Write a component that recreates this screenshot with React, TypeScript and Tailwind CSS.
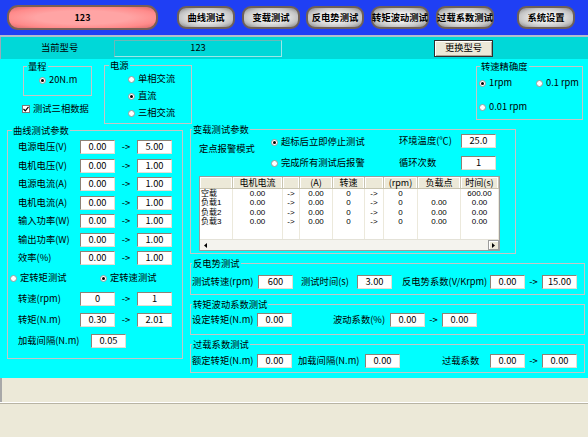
import React from 'react';

// Motor test bench main window: blue tool bar, model strip, cyan form area.

const TOP_BUTTONS = [
  { label: '曲线测试', cls: 'ml-[19px]' },
  { label: '变载测试', cls: 'ml-[7px]' },
  { label: '反电势测试', cls: 'ml-[6px]' },
  { label: '转矩波动测试', cls: 'ml-[7px]' },
  { label: '过载系数测试', cls: 'ml-[7px]' },
  { label: '系统设置', cls: 'ml-[23px]' },
];

const CURVE_ROWS = [
  { label: '电源电压(V)', from: '0.00', to: '5.00' },
  { label: '电机电压(V)', from: '0.00', to: '1.00' },
  { label: '电源电流(A)', from: '0.00', to: '1.00' },
  { label: '电机电流(A)', from: '0.00', to: '1.00' },
  { label: '输入功率(W)', from: '0.00', to: '1.00' },
  { label: '输出功率(W)', from: '0.00', to: '1.00' },
  { label: '效率(%)', from: '0.00', to: '1.00' },
];

const TABLE_HEAD = ['', '电机电流', '', '(A)', '转速', '', '(rpm)', '负载点', '时间(s)'];

const TABLE_ROWS = [
  ['空载', '0.00', '->', '0.00', '0', '->', '0', '', '600.00'],
  ['负载1', '0.00', '->', '0.00', '0', '->', '0', '0.00', '0.00'],
  ['负载2', '0.00', '->', '0.00', '0', '->', '0', '0.00', '0.00'],
  ['负载3', '0.00', '->', '0.00', '0', '->', '0', '0.00', '0.00'],
];

const COLS = 'grid grid-cols-[33px_50px_17px_33px_32px_19px_34px_43px_38px]';

function Field({ value, className = '' }: { value: string; className?: string }) {
  return (
    <span
      className={`flex h-[14px] w-[35px] shrink-0 items-center justify-center border border-t-[#8c8276] border-l-[#8c8276] border-b-[#e4e0d4] border-r-[#e4e0d4] bg-white ${className}`}
    >
      {value}
    </span>
  );
}

function Arrow({ className = 'w-[22px]' }: { className?: string }) {
  return <span className={`shrink-0 text-center ${className}`}>-&gt;</span>;
}

function Radio({ checked, label, className = '' }: { checked?: boolean; label: string; className?: string }) {
  return (
    <span className={`flex h-[12px] items-center gap-[3px] ${className}`}>
      <span className="flex h-[7px] w-[7px] shrink-0 items-center justify-center rounded-full border border-[#9a9a9a] bg-white">
        {checked && <span className="h-[3px] w-[3px] rounded-full bg-black" />}
      </span>
      <span className="whitespace-nowrap">{label}</span>
    </span>
  );
}

function Group({
  title,
  className = '',
  legend = 'ml-[1px]',
  children,
}: {
  title: string;
  className?: string;
  legend?: string;
  children?: React.ReactNode;
}) {
  return (
    <fieldset className={`shrink-0 border border-[#c6c6c6] ${className}`}>
      <legend className={`px-[1px] leading-[12px] ${legend}`}>{title}</legend>
      {children}
    </fieldset>
  );
}

function TopBar() {
  return (
    <div className="flex h-[35px] items-center bg-[#1f3ff4]">
      <div className="ml-[7px] flex h-[25px] w-[151px] items-center justify-center rounded-[11px] border-2 border-[#7a5e54] bg-[radial-gradient(ellipse_at_center,#ffa4a4_45%,#ff8a8a_75%,#d86a6a_100%)] text-[9px] font-bold">
        123
      </div>
      {TOP_BUTTONS.map((b) => (
        <div
          key={b.label}
          className={`flex h-[23px] w-[58px] items-center justify-center rounded-[9px] border-2 border-[#6e6058] bg-[radial-gradient(ellipse_at_center,#ececec_35%,#c4c4c4_70%,#7c7c7c_100%)] text-[9.3px] font-bold whitespace-nowrap ${b.cls}`}
        >
          {b.label}
        </div>
      ))}
    </div>
  );
}

function ModelStrip() {
  return (
    <div className="flex h-[22px] items-center border-l border-[#9ab] bg-[#00d8d8]">
      <span className="ml-[40px] w-[73px]">当前型号</span>
      <span className="flex h-[17px] w-[168px] items-center justify-center border border-[#9ae8e8] border-t-[#6cb8b8] border-l-[#6cb8b8]">
        123
      </span>
      <span className="ml-[152px] flex h-[17px] w-[59px] items-center justify-center border border-[#2e2e2e] bg-[#ece9d8] shadow-[inset_1px_1px_0_#ffffff,inset_-1px_-1px_0_#aca899]">
        更换型号
      </span>
    </div>
  );
}

function CurveGroup() {
  return (
    <Group title="曲线测试参数" className="ml-[7px] h-[235px] w-[176px]" legend="ml-[4px]">
      <div className="flex flex-col gap-[4.5px] pt-[4px] pl-[10px]">
        {CURVE_ROWS.map((r) => (
          <div key={r.label} className="flex h-[14px] items-center">
            <span className="w-[62px] whitespace-nowrap">{r.label}</span>
            <Field value={r.from} />
            <Arrow />
            <Field value={r.to} />
          </div>
        ))}
      </div>
      <div className="mt-[7px] flex pl-[2px]">
        <Radio label="定转矩测试" className="w-[90px]" />
        <Radio checked label="定转速测试" />
      </div>
      <div className="mt-[8px] flex flex-col gap-[7px] pl-[10px]">
        <div className="flex h-[14px] items-center">
          <span className="w-[62px]">转速(rpm)</span>
          <Field value="0" />
          <Arrow />
          <Field value="1" />
        </div>
        <div className="flex h-[14px] items-center">
          <span className="w-[62px]">转矩(N.m)</span>
          <Field value="0.30" />
          <Arrow />
          <Field value="2.01" />
        </div>
        <div className="flex h-[14px] items-center">
          <span className="w-[73px]">加载间隔(N.m)</span>
          <Field value="0.05" />
        </div>
      </div>
    </Group>
  );
}

function LoadTable() {
  return (
    <div className="ml-[8px] flex h-[75px] w-[301px] flex-col overflow-hidden border border-[#9c9c9c] bg-white text-[9px]">
      <div className={`${COLS} h-[12px] bg-[#ece9d8]`}>
        {TABLE_HEAD.map((h, i) => (
          <span
            key={i}
            className="flex items-center justify-center border-r border-b border-[#c8c4b0] shadow-[inset_-1px_0_0_#ffffff,inset_1px_1px_0_#ffffff] whitespace-nowrap"
          >
            {h}
          </span>
        ))}
      </div>
      <div className="flex flex-1 flex-col font-['Liberation_Sans','Noto_Sans_CJK_SC',sans-serif] text-[8px]">
        {TABLE_ROWS.map((row) => (
          <div key={row[0]} className={`${COLS} h-[9.3px] leading-[9.3px]`}>
            {row.map((c, i) => (
              <span
                key={i}
                className={`border-r border-[#ece9dc] whitespace-nowrap ${i === 0 ? 'pl-[1px] text-left' : 'text-center'}`}
              >
                {c}
              </span>
            ))}
          </div>
        ))}
        <div className={`${COLS} flex-1`}>
          {TABLE_HEAD.map((_, i) => (
            <span key={i} className="border-r border-[#ece9dc]" />
          ))}
        </div>
      </div>
      <div className="flex h-[11px] border-t border-[#e4e2d8] bg-[#f4f3ee]">
        <span className="flex w-[11px] items-center justify-center">
          <svg width="3" height="5" viewBox="0 0 3 5">
            <path d="M3 0 L0 2.5 L3 5 Z" fill="#000" />
          </svg>
        </span>
        <span className="flex-1" />
        <span className="flex w-[11px] items-center justify-center border border-[#9c9c9c] bg-[#ece9d8] shadow-[inset_1px_1px_0_#ffffff]">
          <svg width="3" height="5" viewBox="0 0 3 5">
            <path d="M0 0 L3 2.5 L0 5 Z" fill="#000" />
          </svg>
        </span>
      </div>
    </div>
  );
}

function LoadGroup() {
  return (
    <Group title="变载测试参数" className="mt-[-1px] h-[131px] w-[326px]">
      <div className="flex h-[41px] pl-[8px]">
        <span className="mt-[9px] h-[12px] w-[72px] whitespace-nowrap">定点报警模式</span>
        <div className="flex w-[128px] flex-col gap-[9px] pt-[1px]">
          <Radio checked label="超标后立即停止测试" />
          <Radio label="完成所有测试后报警" />
        </div>
        <div className="mt-[-1px] flex flex-col gap-[8px]">
          <div className="flex h-[14px] items-center">
            <span className="w-[62px]">环境温度(℃)</span>
            <Field value="25.0" />
          </div>
          <div className="flex h-[14px] items-center">
            <span className="w-[62px]">循环次数</span>
            <Field value="1" />
          </div>
        </div>
      </div>
      <LoadTable />
    </Group>
  );
}

function CheckBox({ label }: { label: string }) {
  return (
    <span className="flex items-center gap-[3px]">
      <span className="flex h-[8px] w-[8px] items-center justify-center border border-[#7a7a7a] bg-white">
        <svg width="6" height="6" viewBox="0 0 6 6">
          <path d="M0.5 3 L2.3 4.8 L5.5 0.8" stroke="#000" strokeWidth="1.2" fill="none" />
        </svg>
      </span>
      <span>{label}</span>
    </span>
  );
}

export default function App() {
  return (
    <div className="flex h-[437px] w-[588px] flex-col overflow-hidden bg-[#ece9d8] font-['Noto_Sans_CJK_SC',sans-serif] text-[9.3px] leading-none text-black">
      <TopBar />
      <div className="h-[2px] bg-[#b4bccc]" />
      <ModelStrip />

      <div className="flex h-[319px] flex-col bg-[#00ffff]">
        <div className="flex h-[65px] items-start">
          <div className="ml-[22px] flex w-[70px] flex-col">
            <Group title="量程" className="mt-[1px] ml-[1px] h-[36px] w-[69px]" legend="ml-[3px]">
              <div className="pt-[2px] pl-[15px]">
                <Radio checked label="20N.m" />
              </div>
            </Group>
            <div className="mt-[8px]">
              <CheckBox label="测试三相数据" />
            </div>
          </div>

          <Group title="电源" className="ml-[12px] h-[65px] w-[88px]" legend="ml-[4px]">
            <div className="flex flex-col gap-[5px] pt-[2px] pl-[23px]">
              <Radio label="单相交流" />
              <Radio checked label="直流" />
              <Radio label="三相交流" />
            </div>
          </Group>

          <Group title="转速精确度" className="mt-[1px] mr-[5px] ml-auto h-[60px] w-[107px]" legend="ml-[3px]">
            <div className="flex pt-[5px] pl-[2px]">
              <Radio checked label="1rpm" className="w-[57px]" />
              <Radio label="0.1 rpm" />
            </div>
            <div className="mt-[12px] pl-[2px]">
              <Radio label="0.01 rpm" />
            </div>
          </Group>
        </div>

        <div className="flex items-start">
          <CurveGroup />

          <div className="ml-[7px] flex w-[395px] flex-col items-start">
            <LoadGroup />

            <Group title="反电势测试" className="mt-[3px] h-[38px] w-[395px]">
              <div className="mt-[6px] flex h-[14px] items-center pl-[1px]">
                <span className="w-[66px] whitespace-nowrap">测试转速(rpm)</span>
                <Field value="600" />
                <span className="ml-[8px] w-[56px]">测试时间(s)</span>
                <Field value="3.00" />
                <span className="ml-[10px] w-[88px] whitespace-nowrap">反电势系数(V/Krpm)</span>
                <Field value="0.00" />
                <Arrow className="w-[17px]" />
                <Field value="15.00" />
              </div>
            </Group>

            <Group title="转矩波动系数测试" className="mt-[3px] h-[37px] w-[395px]">
              <div className="mt-[3px] flex h-[14px] items-center pl-[1px]">
                <span className="w-[65px] whitespace-nowrap">设定转矩(N.m)</span>
                <Field value="0.00" />
                <span className="ml-[41px] w-[57px]">波动系数(%)</span>
                <Field value="0.00" />
                <Arrow className="w-[17px]" />
                <Field value="0.00" />
              </div>
            </Group>

            <Group title="过载系数测试" className="mt-[3px] h-[35px] w-[395px]">
              <div className="mt-[4px] flex h-[14px] items-center pl-[1px]">
                <span className="w-[65px] whitespace-nowrap">额定转矩(N.m)</span>
                <Field value="0.00" />
                <span className="ml-[6px] w-[67px] whitespace-nowrap">加载间隔(N.m)</span>
                <Field value="0.00" />
                <span className="ml-[42px] w-[48px]">过载系数</span>
                <Field value="0.00" />
                <Arrow className="w-[17px]" />
                <Field value="0.00" />
              </div>
            </Group>
          </div>
        </div>
      </div>

      <div className="h-[24px] border-l-2 border-[#a8a8a8]" />
      <div className="h-[2px] border-t border-b border-t-[#ffffff] border-b-[#b8b4a4]" />
    </div>
  );
}
